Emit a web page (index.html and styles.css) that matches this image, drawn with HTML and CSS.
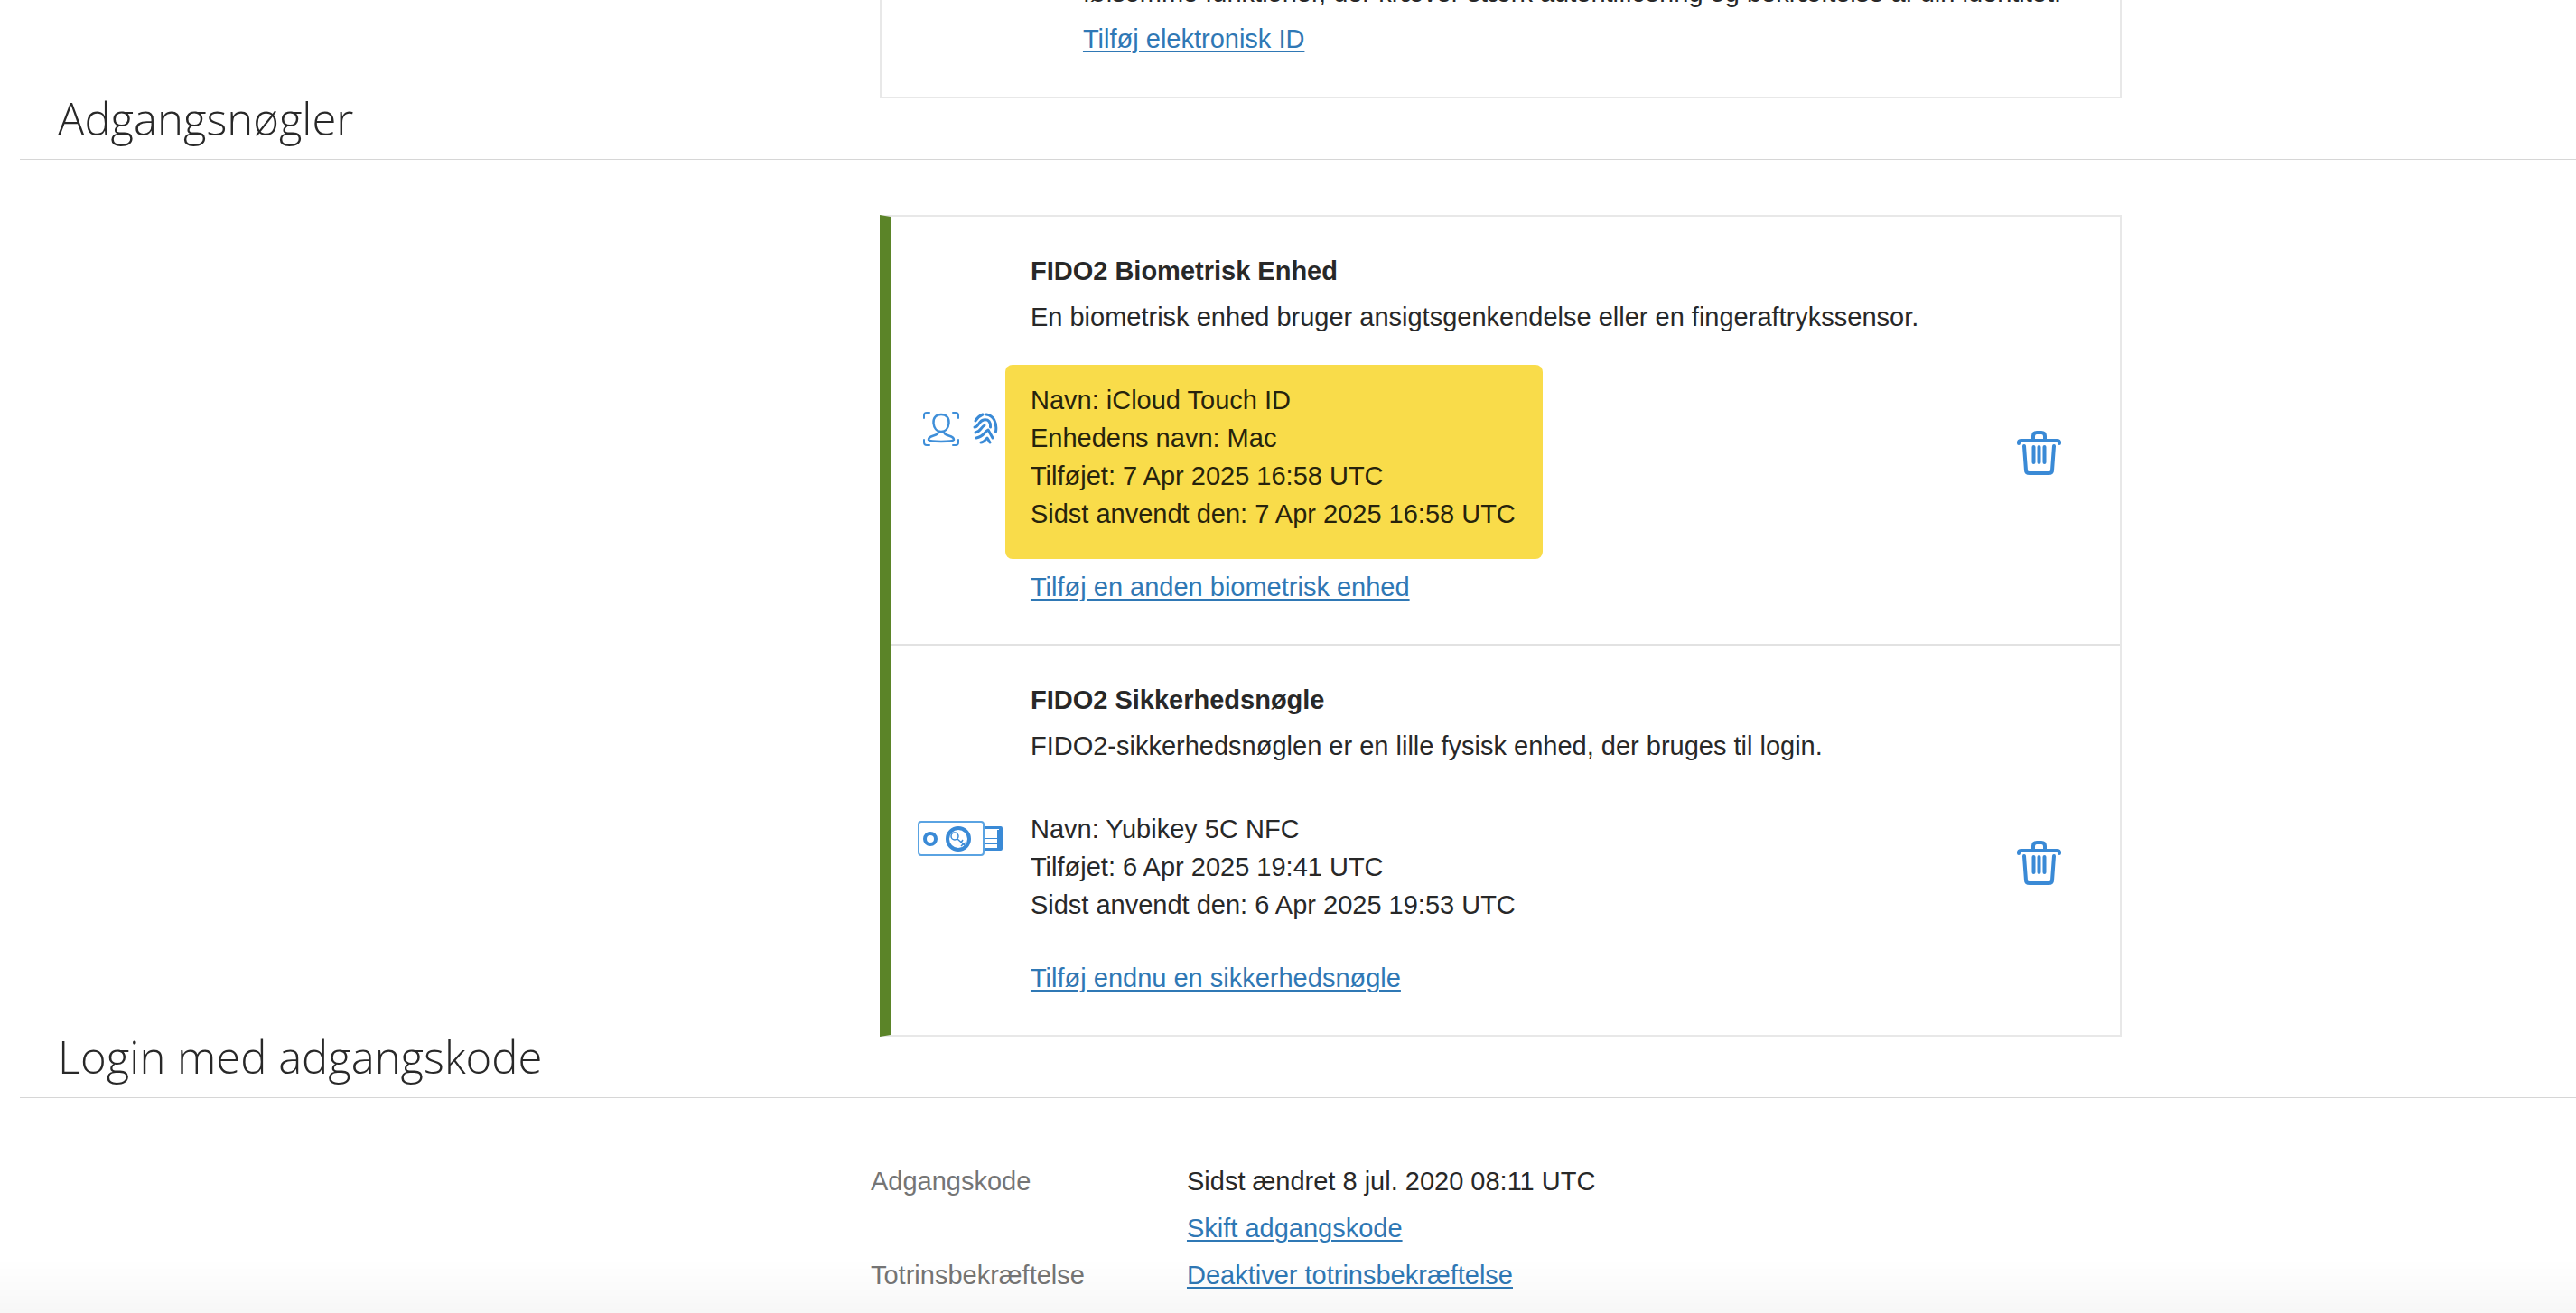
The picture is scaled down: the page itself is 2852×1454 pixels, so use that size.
FILE: index.html
```html
<!DOCTYPE html>
<html lang="da">
<head>
  <meta charset="utf-8">
  <title>Sikkerhed</title>
  <link rel="stylesheet" href="styles.css">
</head>
<body>
  <main>
    <div class="card eid">
      <p>følsomme funktioner, der kræver stærk autentificering og bekræftelse af din identitet.</p>
      <a href="#">Tilføj elektronisk ID</a>
    </div>

    <section>
      <h2>Adgangsnøgler</h2>
      <div class="card keys">
        <div class="key">
          <div class="key-icon">
            <svg width="40" height="38" viewBox="0 0 40 38" fill="none" stroke="#3f8fd9" stroke-linecap="round">
              <path stroke-width="2" d="M1 7V4q0-3 3-3h3M33 1h3q3 0 3 3v3M1 31v3q0 3 3 3h3M33 37h3q3 0 3-3v-3"/>
              <path stroke-width="2.500" d="M20 3c-6 0-9 4-8.500 9.500C12 18 15 22 20 22s8-4 8.500-9.500C29 7 26 3 20 3zM17 22c0 6-11 3-11 9 0 2.500 28 2.500 28 0 0-6-11-3-11-9"/>
            </svg>
            <svg width="28" height="36" viewBox="0 0 28 36" fill="none" stroke="#3a8ad6" stroke-width="3" stroke-linecap="round" stroke-linejoin="round">
              <path d="M3 9q3-5 8-7"/>
              <path d="M15 2c8 1 12 9 10.500 19"/>
              <path d="M2 16c5 0 4-7 10-8 6-1 8 3 7.500 8"/>
              <path d="M3 22c6-1 6-6 10-8"/>
              <path d="M4 28c8-1 9-7 13-9l5 9"/>
              <path d="M9 33c3 0 5-3 7-5l3 5"/>
            </svg>
          </div>
          <div class="key-text">
            <h3>FIDO2 Biometrisk Enhed</h3>
            <p>En biometrisk enhed bruger ansigtsgenkendelse eller en fingeraftrykssensor.</p>
            <ul class="details highlight">
              <li>Navn: iCloud Touch ID</li>
              <li>Enhedens navn: Mac</li>
              <li>Tilføjet: 7 Apr 2025 16:58 UTC</li>
              <li>Sidst anvendt den: 7 Apr 2025 16:58 UTC</li>
            </ul>
            <a href="#">Tilføj en anden biometrisk enhed</a>
          </div>
          <button class="delete" type="button" aria-label="Slet biometrisk enhed">
            <svg width="49" height="49" viewBox="0 0 49 49" fill="none" stroke="#3a8ad6" stroke-width="4" stroke-linecap="round" stroke-linejoin="round">
              <path d="M2 14v-1q0-2 3-2h39q3 0 3 2v1M18 10V6q0-4 4-4h5q4 0 4 4v4M8 17l2 27q0 3 4 3h21q4 0 4-3l2-27M18.500 18v17M24.500 18v17M30.500 18v17"/>
            </svg>
          </button>
        </div>
        <div class="key">
          <div class="key-icon usb">
            <svg width="94" height="40" viewBox="0 0 94 40" fill="none" stroke="#3a8ad6">
              <rect x="1" y="1" width="72" height="37" rx="3" stroke="#5aa3e2" stroke-width="2"/>
              <circle cx="14" cy="20" r="6" stroke-width="4"/>
              <circle cx="45" cy="20" r="12" stroke-width="4"/>
              <circle cx="41" cy="17" r="4" stroke-width="1.500"/>
              <path stroke-width="1.500" d="M44 20l9 8M48 24l2-3M51 26l2-2M50 26l-2 2"/>
              <path fill="#3a8ad6" stroke="none" d="M74 6h18q2 0 2 2v23q0 2-2 2H74v-3h16v-4H74v-1h14v-5H74v-1h14v-5H74v-1h16v-4H74z"/>
              <path fill="#3a8ad6" stroke="none" d="M88 10h4v20h-4z"/>
            </svg>
          </div>
          <div class="key-text">
            <h3>FIDO2 Sikkerhedsnøgle</h3>
            <p>FIDO2-sikkerhedsnøglen er en lille fysisk enhed, der bruges til login.</p>
            <ul class="details">
              <li>Navn: Yubikey 5C NFC</li>
              <li>Tilføjet: 6 Apr 2025 19:41 UTC</li>
              <li>Sidst anvendt den: 6 Apr 2025 19:53 UTC</li>
            </ul>
            <a href="#">Tilføj endnu en sikkerhedsnøgle</a>
          </div>
          <button class="delete" type="button" aria-label="Slet sikkerhedsnøgle">
            <svg width="49" height="49" viewBox="0 0 49 49" fill="none" stroke="#3a8ad6" stroke-width="4" stroke-linecap="round" stroke-linejoin="round">
              <path d="M2 14v-1q0-2 3-2h39q3 0 3 2v1M18 10V6q0-4 4-4h5q4 0 4 4v4M8 17l2 27q0 3 4 3h21q4 0 4-3l2-27M18.500 18v17M24.500 18v17M30.500 18v17"/>
            </svg>
          </button>
        </div>
      </div>
    </section>

    <section>
      <h2>Login med adgangskode</h2>
      <dl class="login">
        <dt>Adgangskode</dt>
        <dd>Sidst ændret 8 jul. 2020 08:11 UTC</dd>
        <dd><a href="#">Skift adgangskode</a></dd>
        <dt>Totrinsbekræftelse</dt>
        <dd><a href="#">Deaktiver totrinsbekræftelse</a></dd>
      </dl>
    </section>
  </main>
  <div class="fade"></div>
</body>
</html>
```
FILE: styles.css
```css
* {
  box-sizing: border-box;
}

body {
  margin: 0;
  background: #fff;
  color: #282828;
  font-family: "Liberation Sans", Arial, sans-serif;
  font-size: 29px;
  line-height: 42px;
}

main {
  overflow: hidden;
}

h2, h3, p, ul, dl, dd {
  margin: 0;
  padding: 0;
}

a {
  color: #2f78b5;
  text-decoration: underline;
  text-decoration-thickness: 2px;
  text-underline-offset: 3px;
}

h2 {
  margin: 2px 0 0 22px;
  padding: 0 42px 25px;
  border-bottom: 1px solid #d6d6d6;
  font-family: "Open Sans", sans-serif;
  font-size: 49px;
  font-weight: 300;
  line-height: 40px;
}

h3 {
  font-size: 29px;
  font-weight: bold;
  margin-bottom: 9px;
}

.card {
  width: 48.21%;
  margin-left: 34.15%;
  border: 2px solid #e8e8e8;
}

/* only the end of this card is in view */
.eid {
  margin-top: -29px;
  border-top: 0;
  padding: 0 60px 43px 223px;
}

.eid p {
  margin-bottom: 9px;
  white-space: nowrap;
}

.keys {
  margin-top: 61px;
  border-left: 12px solid #5b8428;
}

.key {
  display: flex;
  align-items: center;
  padding: 39px 65px 42px 0;
}

.key + .key {
  border-top: 2px solid #e2e2e2;
}

.key-icon {
  display: flex;
  align-items: center;
  gap: 15px;
  width: 155px;
  padding-left: 36px;
}

.usb {
  padding-left: 30px;
}

.key-text {
  flex: 1;
}

.details {
  width: fit-content;
  list-style: none;
  margin: 32px 0 10px -28px;
  padding: 18px 30px 29px 28px;
  border-radius: 8px;
}

.highlight {
  background: #f9dc4a;
  color: #27230c;
}

.delete {
  padding: 52px 0 0;
  border: 0;
  background: none;
  cursor: pointer;
}

.delete svg {
  display: block;
}

.login {
  display: grid;
  grid-template-columns: 350px 1fr;
  row-gap: 10px;
  margin: 71px 0 20px 33.8%;
}

.login dt {
  color: #757575;
}

.login dd {
  grid-column: 2;
}

.fade {
  position: fixed;
  left: 0;
  right: 0;
  bottom: 0;
  height: 60px;
  background: linear-gradient(rgba(0, 0, 0, 0), rgba(0, 0, 0, 0.03));
  pointer-events: none;
}
```
